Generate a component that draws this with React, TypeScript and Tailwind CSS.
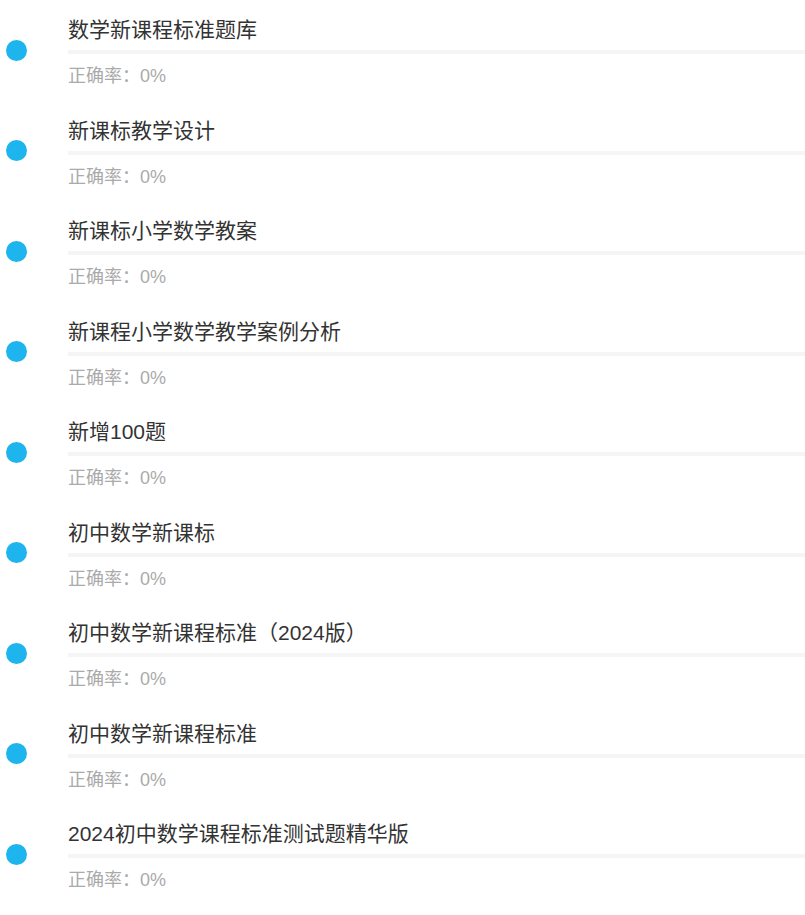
const items = [
  "数学新课程标准题库",
  "新课标教学设计",
  "新课标小学数学教案",
  "新课程小学数学教学案例分析",
  "新增100题",
  "初中数学新课标",
  "初中数学新课程标准（2024版）",
  "初中数学新课程标准",
  "2024初中数学课程标准测试题精华版",
]

export default function App() {
  return (
    <div className="bg-white w-[805px] min-h-[915px] font-['Liberation_Sans','Noto_Sans_CJK_SC',sans-serif]">
      {items.map((title) => (
        <div key={title} className="flex items-center h-[100.5px]">
          <div className="w-[68px] shrink-0 pl-[6px]">
            <div className="w-[21px] h-[21px] rounded-full bg-[#1eb5ee]" />
          </div>
          <div className="flex-1 flex flex-col pt-[15px] pb-[8.5px]">
            <p className="text-[21px] leading-[30px] h-[30px] text-[#333333] whitespace-nowrap">{title}</p>
            <div className="mt-[5px] h-[4px] bg-[#f5f5f5]" />
            <p className="mt-[6px] text-[18px] leading-[32px] h-[32px] text-[#aaaaaa]">正确率：0%</p>
          </div>
        </div>
      ))}
    </div>
  )
}
